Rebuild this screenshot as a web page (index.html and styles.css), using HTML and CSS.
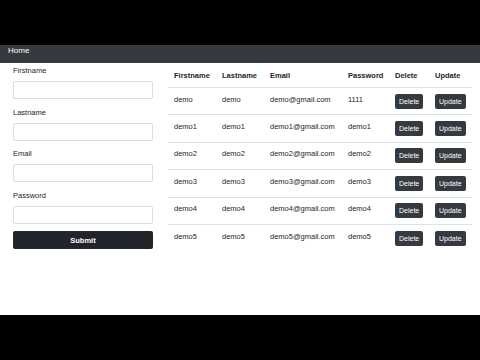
FILE: index.html
```html
<!DOCTYPE html>
<html>
<head>
    <title>Users</title>
    <link rel="stylesheet" href="styles.css">
</head>
<body>
    <div class="screen">
        <nav class="navbar">Home</nav>

        <div class="main">
            <form class="user-form">
                <label>Firstname</label>
                <input type="text">
                <label>Lastname</label>
                <input type="text">
                <label>Email</label>
                <input type="text">
                <label>Password</label>
                <input type="password">
                <button type="submit" class="submit">Submit</button>
            </form>

            <table class="users">
                <colgroup>
                    <col style="width: 48px">
                    <col style="width: 48px">
                    <col style="width: 78px">
                    <col style="width: 47px">
                    <col style="width: 40px">
                    <col style="width: 43px">
                </colgroup>
                <thead>
                    <tr>
                        <th>Firstname</th>
                        <th>Lastname</th>
                        <th>Email</th>
                        <th>Password</th>
                        <th>Delete</th>
                        <th>Update</th>
                    </tr>
                </thead>
                <tbody>
                    <tr>
                        <td>demo</td><td>demo</td><td>demo@gmail.com</td><td>1111</td>
                        <td><button class="btn">Delete</button></td>
                        <td><button class="btn">Update</button></td>
                    </tr>
                    <tr>
                        <td>demo1</td><td>demo1</td><td>demo1@gmail.com</td><td>demo1</td>
                        <td><button class="btn">Delete</button></td>
                        <td><button class="btn">Update</button></td>
                    </tr>
                    <tr>
                        <td>demo2</td><td>demo2</td><td>demo2@gmail.com</td><td>demo2</td>
                        <td><button class="btn">Delete</button></td>
                        <td><button class="btn">Update</button></td>
                    </tr>
                    <tr>
                        <td>demo3</td><td>demo3</td><td>demo3@gmail.com</td><td>demo3</td>
                        <td><button class="btn">Delete</button></td>
                        <td><button class="btn">Update</button></td>
                    </tr>
                    <tr>
                        <td>demo4</td><td>demo4</td><td>demo4@gmail.com</td><td>demo4</td>
                        <td><button class="btn">Delete</button></td>
                        <td><button class="btn">Update</button></td>
                    </tr>
                    <tr>
                        <td>demo5</td><td>demo5</td><td>demo5@gmail.com</td><td>demo5</td>
                        <td><button class="btn">Delete</button></td>
                        <td><button class="btn">Update</button></td>
                    </tr>
                </tbody>
            </table>
        </div>
    </div>
</body>
</html>
```

FILE: styles.css
```css
body {
    margin: 0;
    background: #000;
    font-family: "Liberation Sans", Arial, sans-serif;
    font-size: 7.5px;
    color: #212529;
}
.screen {
    margin-top: 45px;
    height: 270px;
    background: #fff;
}
.navbar {
    height: 18px;
    background: #343a40;
    color: #fff;
    font-size: 8px;
    line-height: 12px;
    padding-left: 8px;
    box-sizing: border-box;
}
.main {
    display: flex;
    gap: 15px;
    padding: 0 8px 0 13px;
}
.user-form {
    width: 140px;
    display: flex;
    flex-direction: column;
    padding-top: 2px;
}
.user-form label {
    line-height: 12px;
}
.user-form input {
    height: 18px;
    margin: 4px 0 7.5px;
    border: 1px solid #dadde1;
    border-radius: 2px;
    box-sizing: border-box;
    padding: 0 4px;
}
.submit {
    height: 18px;
    background: #212529;
    color: #fff;
    border: none;
    border-radius: 2px;
    font-family: inherit;
    font-size: 7.5px;
    font-weight: bold;
    cursor: pointer;
}
.users {
    width: 304px;
    border-collapse: collapse;
    table-layout: fixed;
    margin-top: 1px;
}
.users th {
    text-align: left;
    font-weight: bold;
    line-height: 12px;
    padding: 6px 6px 5px;
    border-bottom: 1px solid #dee2e6;
}
.users td {
    vertical-align: top;
    line-height: 12px;
    padding: 5.7px 6px;
    border-top: 1px solid #dee2e6;
    white-space: nowrap;
}
.users tbody tr:first-child td {
    border-top: none;
}
.btn {
    display: inline-block;
    vertical-align: top;
    height: 15px;
    padding: 0 4px;
    background: #343a40;
    color: #fff;
    border: none;
    border-radius: 2px;
    font-family: inherit;
    font-size: 7px;
    cursor: pointer;
}
```
